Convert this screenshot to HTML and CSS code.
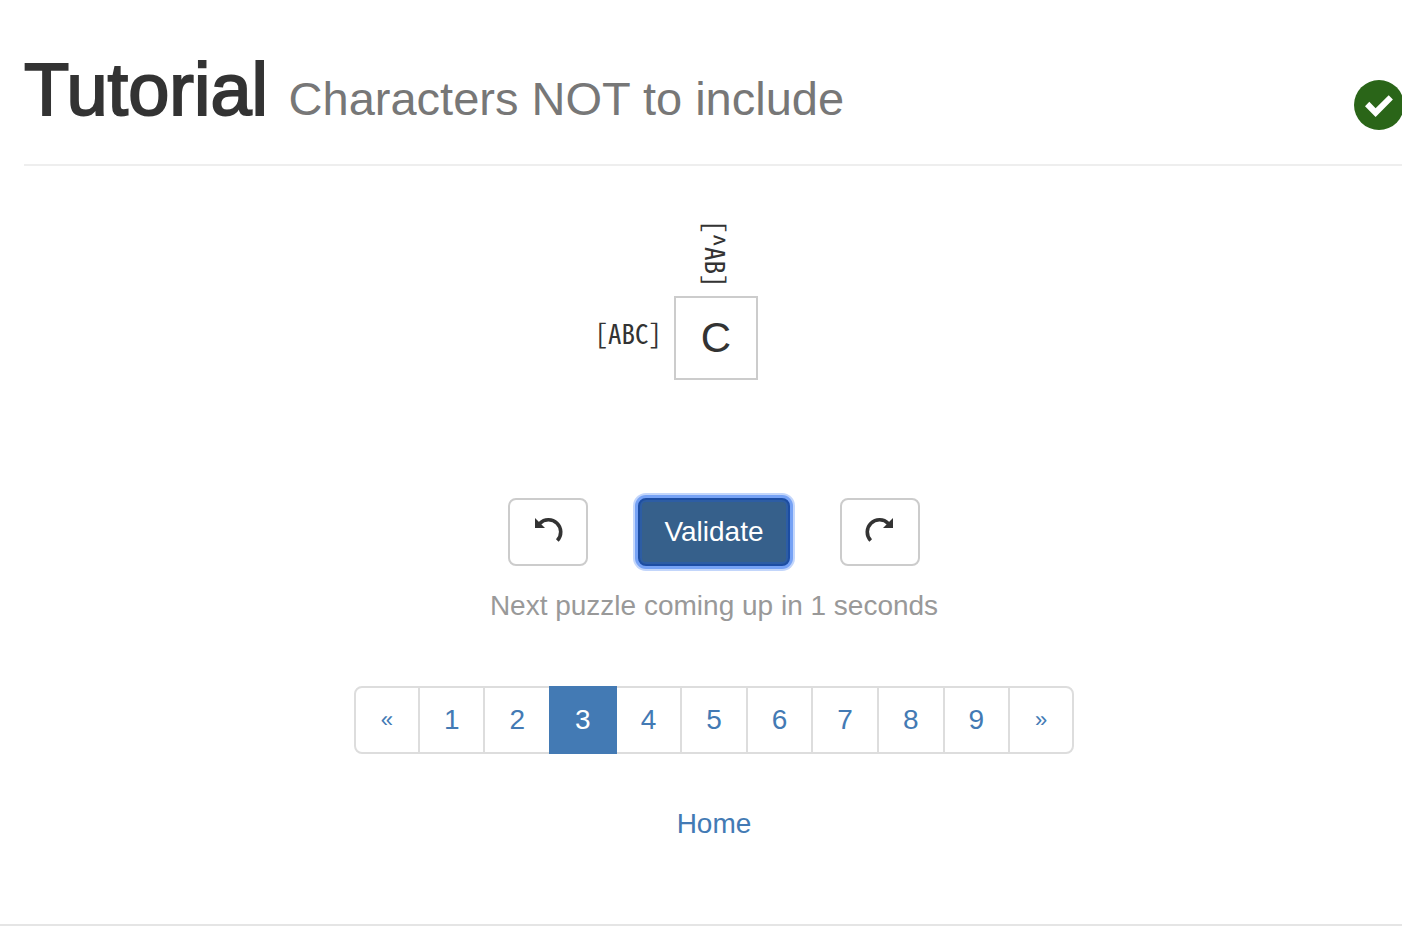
FILE: index.html
```html
<!DOCTYPE html>
<html lang="en">
<head>
<meta charset="utf-8">
<title>Tutorial</title>
<link rel="stylesheet" href="styles.css">
</head>
<body>
<main class="container">
  <header class="page-header">
    <h1 class="title">Tutorial <small class="subtitle">Characters NOT to include</small></h1>
    <svg class="solved" viewBox="0 0 50 50" role="img" aria-label="Solved">
      <circle cx="25" cy="25" r="25" fill="#2a6518"/>
      <path d="M15.300 21.800L21.600 28.300L34.700 15.300L38.900 19.500L21.600 37L11 26.200Z" fill="#fff"/>
    </svg>
  </header>

  <section class="puzzle">
    <span class="clue clue-top" id="clue-col">[^AB]</span>
    <span class="clue clue-left" id="clue-row">[ABC]</span>
    <input class="cell" type="text" maxlength="1" value="C" aria-labelledby="clue-row clue-col">
  </section>

  <div class="actions">
    <button class="btn" type="button" aria-label="Undo">
      <svg class="btn-icon" viewBox="0 0 30 26">
        <path d="M6.700 7.500A12.200 12.200 0 0 1 24.300 24.500" fill="none" stroke="#333" stroke-width="3.600"/>
        <path d="M2 2V12H12Z" fill="#333"/>
      </svg>
    </button>
    <button class="btn btn-primary" type="button">Validate</button>
    <button class="btn" type="button" aria-label="Redo">
      <svg class="btn-icon" viewBox="0 0 30 26">
        <path d="M23.300 7.500A12.200 12.200 0 0 0 5.700 24.500" fill="none" stroke="#333" stroke-width="3.600"/>
        <path d="M28 2V12H18Z" fill="#333"/>
      </svg>
    </button>
  </div>
  <p class="status">Next puzzle coming up in 1 seconds</p>

  <nav aria-label="Puzzles">
    <ul class="pagination">
      <li><a class="page page-arrow" href="#" aria-label="Previous">«</a></li>
      <li><a class="page" href="#">1</a></li>
      <li><a class="page" href="#">2</a></li>
      <li><a class="page page-active" href="#" aria-current="page">3</a></li>
      <li><a class="page" href="#">4</a></li>
      <li><a class="page" href="#">5</a></li>
      <li><a class="page" href="#">6</a></li>
      <li><a class="page" href="#">7</a></li>
      <li><a class="page" href="#">8</a></li>
      <li><a class="page" href="#">9</a></li>
      <li><a class="page page-arrow" href="#" aria-label="Next">»</a></li>
    </ul>
  </nav>
  <p class="home"><a class="link" href="#">Home</a></p>
</main>
<footer class="footer"></footer>
</body>
</html>
```
FILE: styles.css
```css
* { box-sizing: border-box; }
body {
  margin: 0;
  overflow-x: hidden;
  background: #fff;
  color: #333;
  font: 28px/40px "Helvetica Neue", "Liberation Sans", Arial, sans-serif;
}
.container { margin: 0 -2px 0 24px; }
.page-header {
  display: flex;
  justify-content: space-between;
  align-items: flex-end;
  padding: 50px 0 34px;
  border-bottom: 2px solid #eee;
}
.title {
  margin: 0;
  font-size: 74px;
  line-height: 80px;
  font-weight: 400;
  -webkit-text-stroke: 2px #333;
}
.subtitle {
  color: #777;
  font-size: 47px;
  line-height: 40px;
  -webkit-text-stroke: 0;
}
.solved { width: 50px; height: 50px; flex: none; }
.puzzle {
  display: grid;
  grid-template-columns: 1fr 84px 1fr;
  gap: 8px 12px;
  align-items: center;
  padding: 54px 0 0 4px;
}
.clue {
  font: 27px/28px "Noto Sans Mono CJK JP", "DejaVu Sans Mono", monospace;
}
.clue-top {
  grid-column: 2;
  justify-self: center;
  writing-mode: vertical-rl;
}
.clue-left { grid-column: 1; justify-self: end; padding-bottom: 10px; }
.cell {
  width: 84px;
  height: 84px;
  padding: 0;
  border: 2px solid #ccc;
  background: #fff;
  color: #333;
  font: inherit;
  font-size: 42px;
  text-align: center;
}
.actions {
  display: flex;
  justify-content: center;
  gap: 50px;
  margin-top: 118px;
}
.btn {
  display: flex;
  justify-content: center;
  align-items: center;
  height: 68px;
  min-width: 80px;
  padding: 0;
  border: 2px solid #ccc;
  border-radius: 8px;
  background: #fff;
  color: #333;
  font: inherit;
}
.btn-icon { width: 30px; height: 26px; margin-bottom: 6px; }
.btn-primary {
  padding: 0 24px;
  border-color: #1c4da3;
  background: #36608b;
  color: #fff;
  box-shadow: inset 0 0 0 2px #2d5da4, 0 0 0 3px #76a2f5, 0 0 0 5px #c3d6fb;
}
.status { margin: 20px 0 0; color: #999; text-align: center; }
.pagination {
  display: flex;
  justify-content: center;
  margin: 60px 0 0;
  padding: 0 0 0 2px;
  list-style: none;
}
.page {
  display: block;
  margin-left: -2px;
  padding: 12px 24px;
  border: 2px solid #ddd;
  color: #437ab4;
  text-decoration: none;
}
.page-arrow { padding: 12px 25px; font-size: 22px; }
.pagination li:first-child .page { border-radius: 8px 0 0 8px; }
.pagination li:last-child .page { border-radius: 0 8px 8px 0; }
.page-active {
  position: relative;
  border-color: #437ab4;
  background: #437ab4;
  color: #fff;
}
.home { margin: 50px 0 80px; text-align: center; }
.link { color: #437ab4; text-decoration: none; }
.footer { border-top: 2px solid #e5e5e5; }
```
